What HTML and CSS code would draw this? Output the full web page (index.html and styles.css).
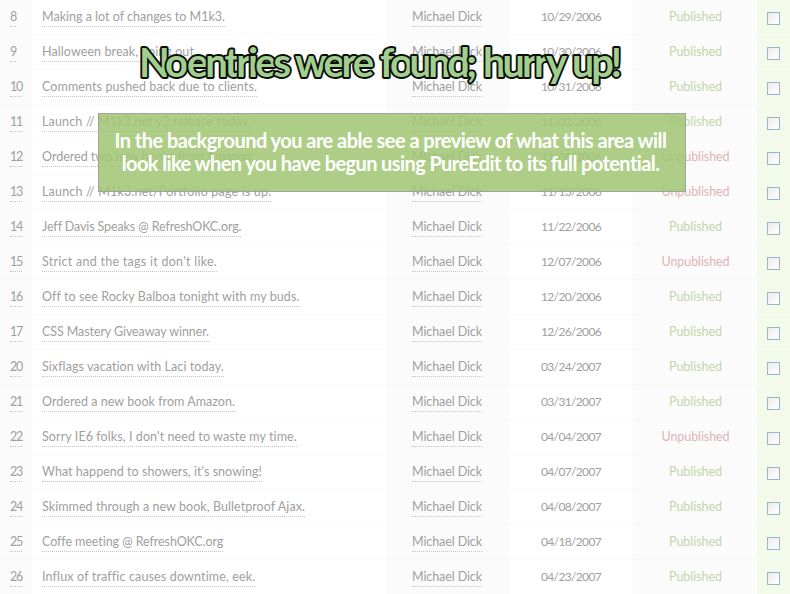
FILE: index.html
```
<!DOCTYPE html>
<html lang="en">
<head>
<meta charset="utf-8">
<title>PureEdit entries</title>
<link rel="stylesheet" href="styles.css">
</head>
<body>
<main class="entries" id="entries"></main>
<svg class="headline" width="790" height="110" viewBox="0 0 790 110">
  <g>
    <text x="139" y="77" textLength="49">No</text>
    <text x="187" y="77" textLength="104">entries</text>
    <text x="295" y="77" textLength="79">were</text>
    <text x="380" y="77" textLength="97">found;</text>
    <text x="483" y="77" textLength="84">hurry</text>
    <text x="572" y="77" textLength="50">up!</text>
  </g>
</svg>
<div class="notice">
  <p><span class="fit" data-width="552">In the background you are able see a preview of what this area will</span></p>
  <p><span class="fit" data-width="538">look like when you have begun using PureEdit to its full potential.</span></p>
</div>
<script src="entries.js"></script>
</body>
</html>
```
FILE: styles.css
```
* { box-sizing: border-box; }
body {
  margin: 0;
  width: 790px;
  height: 594px;
  overflow: hidden;
  position: relative;
  background: #fff;
  color: #a0a0a0;
  font: 12.5px/18px Lato, "Liberation Sans", sans-serif;
}
.row {
  display: grid;
  grid-template-columns: 32px 354px 123px 124px 124px 33px;
  height: 35px;
}
.cell {
  padding-top: 8px;
  border-bottom: 1px solid #f9faf4;
  white-space: nowrap;
}
.num { padding-left: 10px; background: #fbfbfb; }
.title { padding-left: 10px; }
.author { padding-left: 26px; background: #fbfbfb; }
.date { padding-left: 32px; font-size: 12px; }
.status { text-align: center; padding-left: 1px; background: #fbfbfb; color: #c4d6a9; }
.status.off { color: #dfb4b6; }
.check { padding: 12px 0 0 10px; background: #f3faea; }
.fit { display: inline-block; white-space: nowrap; }
.cell .fit { height: 19px; line-height: 18px; }
.cell .link { border-bottom: 1px dotted #c4c4c4; }
.box {
  display: block;
  width: 13px;
  height: 13px;
  border: 1px solid #9cb3cc;
  background: linear-gradient(135deg, #ececea, #fff);
}
.headline { position: absolute; left: 0; top: 0; }
.headline text {
  font: 700 40px Lato, sans-serif;
  fill: #a2ce8f;
  stroke: #0b0f0a;
  stroke-width: 3.8px;
  stroke-linejoin: round;
  paint-order: stroke;
}
.notice {
  position: absolute;
  left: 98px;
  top: 113px;
  width: 588px;
  height: 79px;
  padding: 15px 3px 0 0;
  border: 1px solid #a0a49b;
  background: rgba(161, 198, 116, .86);
  color: #fff;
  text-align: center;
  font-size: 20px;
  font-weight: 700;
  line-height: 23px;
}
.notice p { margin: 0; }
```
FILE: entries.js
```
// [number, title, title width, date, published]
const entries = [
  [8, "Making a lot of changes to M1k3.", 183, "10/29/2006", 1],
  [9, "Halloween break, going out.", 155, "10/30/2006", 1],
  [10, "Comments pushed back due to clients.", 215, "10/31/2006", 1],
  [11, "Launch // M1k3.net v2 release today.", 209, "11/02/2006", 1],
  [12, "Ordered two new books from Amazon.", 212, "11/06/2006", 0],
  [13, "Launch // M1k3.net/Portfolio page is up.", 229, "11/13/2006", 0],
  [14, "Jeff Davis Speaks @ RefreshOKC.org.", 199, "11/22/2006", 1],
  [15, "Strict and the tags it don't like.", 175, "12/07/2006", 0],
  [16, "Off to see Rocky Balboa tonight with my buds.", 257, "12/20/2006", 1],
  [17, "CSS Mastery Giveaway winner.", 167, "12/26/2006", 1],
  [20, "Sixflags vacation with Laci today.", 182, "03/24/2007", 1],
  [21, "Ordered a new book from Amazon.", 193, "03/31/2007", 1],
  [22, "Sorry IE6 folks, I don't need to waste my time.", 255, "04/04/2007", 0],
  [23, "What happend to showers, it's snowing!", 220, "04/07/2007", 1],
  [24, "Skimmed through a new book, Bulletproof Ajax.", 263, "04/08/2007", 1],
  [25, "Coffe meeting @ RefreshOKC.org", 181, "04/18/2007", 1],
  [26, "Influx of traffic causes downtime, eek.", 213, "04/23/2007", 1]
];
const fit = (text, width, cls = "") =>
  `<span class="fit ${cls}" data-width="${width}">${text}</span>`;

document.getElementById("entries").innerHTML = entries.map(([n, title, w, date, on]) => `
  <div class="row">
    <div class="cell num">${fit(n, n < 10 ? 6 : 12, "link")}</div>
    <div class="cell title">${fit(title, w, "link")}</div>
    <div class="cell author">${fit("Michael Dick", 70, "link")}</div>
    <div class="cell date">${fit(date, 60)}</div>
    <div class="cell status ${on ? "" : "off"}">${fit(on ? "Published" : "Unpublished", on ? 53 : 68)}</div>
    <div class="cell check"><span class="box"></span></div>
  </div>`).join("");

for (const el of document.querySelectorAll(".fit")) {
  const width = Number(el.dataset.width);
  const gap = (width - el.getBoundingClientRect().width) / el.textContent.length;
  el.style.letterSpacing = gap + "px";
  el.style.width = width + "px";
}
```
